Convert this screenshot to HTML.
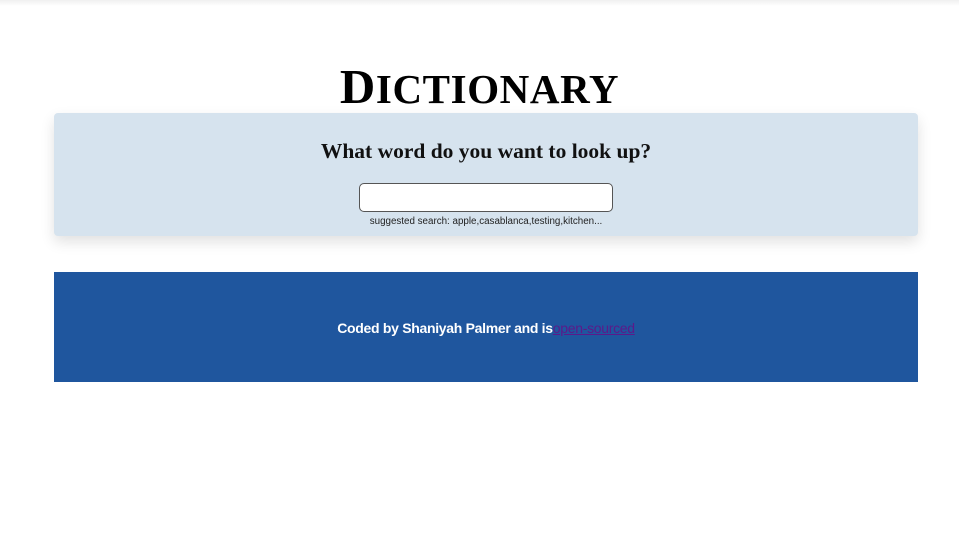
<!DOCTYPE html>
<html><head><meta charset="utf-8"><style>
html,body{margin:0;padding:0;background:#fff;width:959px;height:545px;overflow:hidden}
.topbar{position:absolute;left:0;top:0;width:959px;height:6px;background:linear-gradient(#f0f0f0,#fff)}
h1{position:absolute;left:0;top:59px;width:959px;margin:0;text-align:center;font:bold 49px "Liberation Serif",serif;line-height:56px;letter-spacing:0.6px;white-space:nowrap}
h1 span{font-size:41px}
.box{position:absolute;left:54px;top:113px;width:864px;height:123px;background:#d6e3ee;border-radius:4px;box-shadow:0 6px 14px rgba(0,0,0,.12)}
.q{position:absolute;left:0;width:864px;top:26px;text-align:center;font:bold 21.5px "Liberation Serif",serif;color:#111}
.inp{position:absolute;left:305px;top:70px;width:254px;height:29px;background:#fff;border:1px solid #555;border-radius:5px;box-sizing:border-box}
.sug{position:absolute;left:0;width:864px;top:103px;text-align:center;font:9.8px "Liberation Sans",sans-serif;color:#222}
.foot{position:absolute;left:54px;top:272px;width:864px;height:110px;background:#1f569e}
.ft{position:absolute;left:0;width:864px;top:48px;text-align:center;font:bold 14px "Liberation Sans",sans-serif;color:#fff;letter-spacing:-0.3px}
.ft a{color:#5b1a8a;font-weight:normal;text-decoration:underline}
</style></head><body>
<div class="topbar"></div>
<h1>D<span>ICTIONARY</span></h1>
<div class="box">
<div class="q">What word do you want to look up?</div>
<div class="inp"></div>
<div class="sug">suggested search: apple,casablanca,testing,kitchen...</div>
</div>
<div class="foot"><div class="ft">Coded by Shaniyah Palmer and is<a>open-sourced</a></div></div>
</body></html>
